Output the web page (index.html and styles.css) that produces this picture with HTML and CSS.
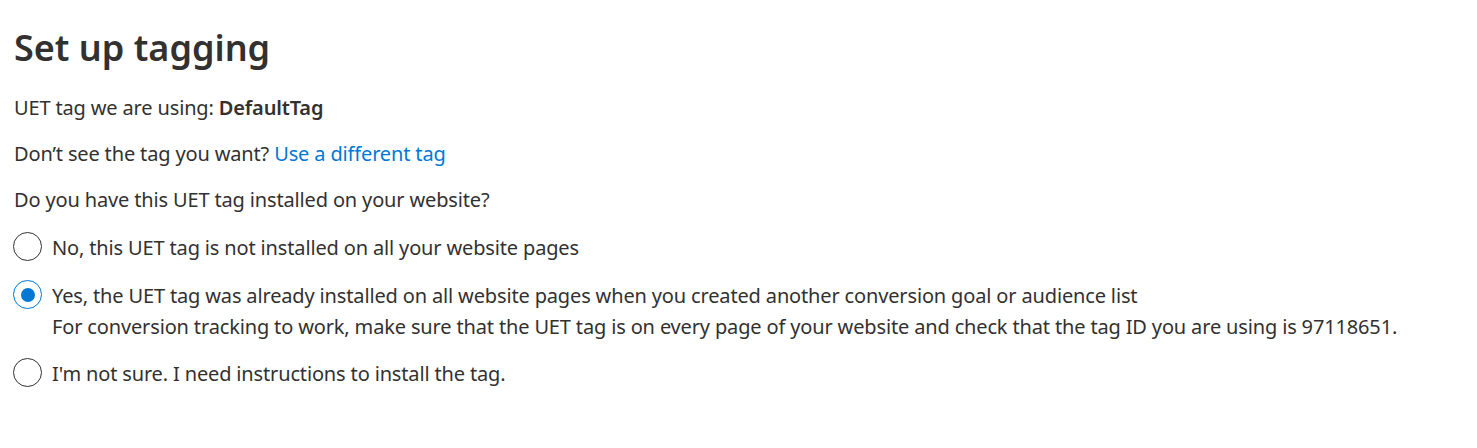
FILE: index.html
```html
<!DOCTYPE html>
<html lang="en">
<head>
    <meta charset="UTF-8">
    <title>Set up tagging</title>
    <link rel="stylesheet" href="styles.css">
</head>
<body>
    <div class="page">
        <h1 class="title">Set up tagging</h1>
        <p class="line">UET tag we are using: <b>DefaultTag</b></p>
        <p class="line">Don’t see the tag you want? <a href="#" class="link">Use a different tag</a></p>
        <p class="line">Do you have this UET tag installed on your website?</p>

        <div class="choices">
            <label class="choice">
                <span class="radio"></span>
                <span class="choice-text">No, this UET tag is not installed on all your website pages</span>
            </label>
            <label class="choice">
                <span class="radio checked"></span>
                <span class="choice-text">
                    Yes, the UET tag was already installed on all website pages when you created another conversion goal or audience list
                    <span class="hint">For conversion tracking to work, make sure that the UET tag is on every page of your website and check that the tag ID you are using is 97118651.</span>
                </span>
            </label>
            <label class="choice">
                <span class="radio"></span>
                <span class="choice-text">I'm not sure. I need instructions to install the tag.</span>
            </label>
        </div>
    </div>
</body>
</html>
```

FILE: styles.css
```css
html, body {
    margin: 0;
    padding: 0;
    background: #fff;
    font-family: "Segoe UI", "Noto Sans", sans-serif;
    color: #323130;
    letter-spacing: -0.15px;
}
.page {
    padding: 24px 14px;
}
.title {
    margin: 0 0 22px;
    font-size: 36px;
    font-weight: 600;
    line-height: 48px;
    letter-spacing: 0;
}
.line {
    margin: 0 0 18px;
    font-size: 20px;
    line-height: 28px;
}
.line b {
    font-weight: 600;
}
.link {
    color: #0078d4;
    text-decoration: none;
}
.choices {
    margin-top: 4px;
    display: flex;
    flex-direction: column;
    gap: 16px;
}
.choice {
    display: flex;
    align-items: flex-start;
    gap: 10px;
    font-size: 20px;
    line-height: 32px;
}
.radio {
    flex-shrink: 0;
    box-sizing: border-box;
    width: 29px;
    height: 29px;
    margin: 0 0 0 -1px;
    border: 1px solid #323130;
    border-radius: 50%;
    display: flex;
    align-items: center;
    justify-content: center;
}
.radio.checked {
    border-color: #0078d4;
}
.radio.checked::after {
    content: "";
    width: 14px;
    height: 14px;
    border-radius: 50%;
    background: #0078d4;
}
.hint {
    display: block;
    line-height: 30px;
}
```
